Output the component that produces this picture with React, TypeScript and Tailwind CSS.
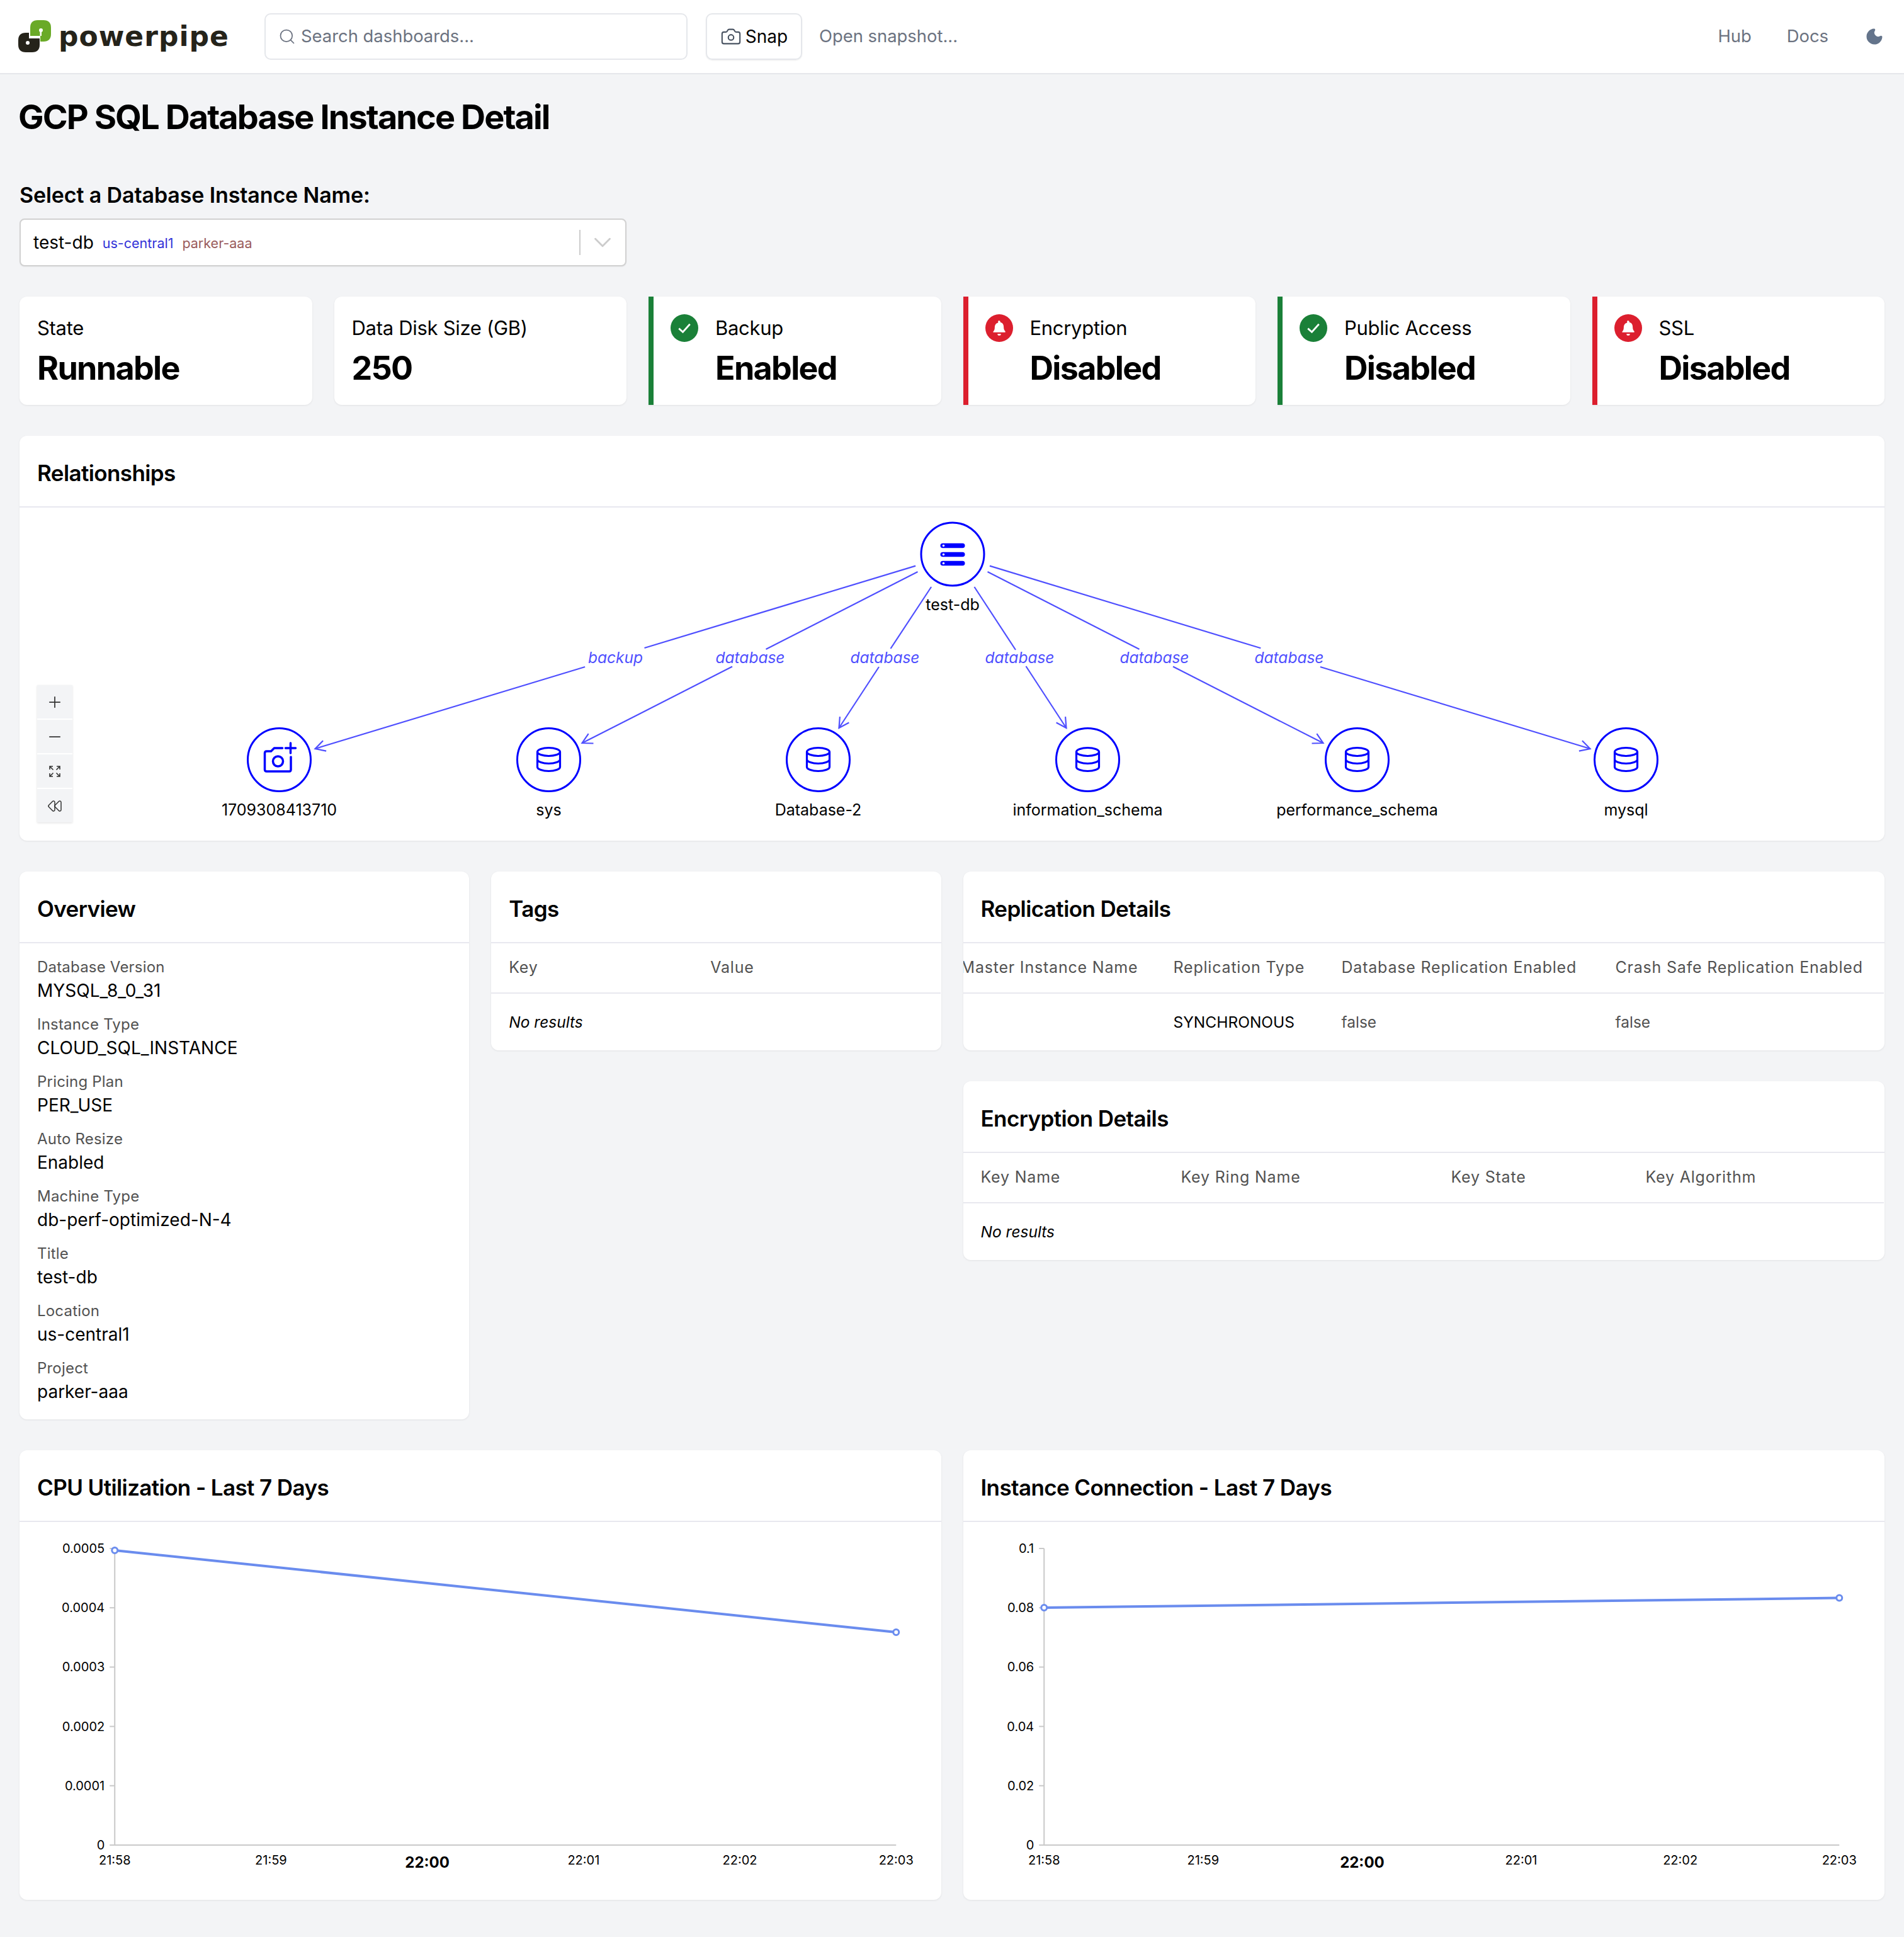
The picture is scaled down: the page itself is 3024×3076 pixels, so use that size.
import { Camera, ChevronDown, Minus, Moon, Plus, Rewind, Search } from 'lucide-react';
import type { ReactNode } from 'react';

const BLUE = '#0000ff';
const EDGE = '#4f4fff';

type Pt = [number, number];

const edges: { label: string; lx: number; a: Pt; b: Pt; c: Pt; tip: Pt }[] = [
  { label: 'backup', lx: 977, a: [1453.6, 898.6], b: [1023, 1029], c: [928.6, 1059], tip: [500, 1189] },
  { label: 'database', lx: 1191, a: [1457, 908], b: [1216, 1031], c: [1162.5, 1058.6], tip: [924, 1180] },
  { label: 'database', lx: 1405, a: [1478.6, 932], b: [1414, 1030], c: [1395.5, 1059], tip: [1332, 1156] },
  { label: 'database', lx: 1619, a: [1547, 932], b: [1612.5, 1032], c: [1629, 1058], tip: [1693, 1156] },
  { label: 'database', lx: 1833, a: [1568, 908], b: [1809, 1031], c: [1862.5, 1058.6], tip: [2101, 1180] },
  { label: 'database', lx: 2047, a: [1571.4, 898.6], b: [2001.8, 1029.3], c: [2096.4, 1059], tip: [2525, 1189] },
];

const nodes = [
  { x: 443, label: '1709308413710' },
  { x: 871, label: 'sys' },
  { x: 1299, label: 'Database-2' },
  { x: 1727, label: 'information_schema' },
  { x: 2155, label: 'performance_schema' },
  { x: 2582, label: 'mysql' },
];

function arrowHead(from: Pt, tip: Pt) {
  const ang = Math.atan2(tip[1] - from[1], tip[0] - from[0]);
  const len = 18;
  const p1 = [tip[0] - len * Math.cos(ang - 0.5), tip[1] - len * Math.sin(ang - 0.5)];
  const p2 = [tip[0] - len * Math.cos(ang + 0.5), tip[1] - len * Math.sin(ang + 0.5)];
  return `M${p1[0]} ${p1[1]} L${tip[0]} ${tip[1]} L${p2[0]} ${p2[1]}`;
}

function DbIcon({ x }: { x: number }) {
  return (
    <g fill="none" stroke={BLUE} strokeWidth="3.2" transform={`translate(${x} 1206)`}>
      <ellipse cx="0" cy="-12" rx="18" ry="6.5" />
      <path d="M-18 -12 V12 C-18 15.500 -10 18.500 0 18.500 C10 18.500 18 15.500 18 12 V-12" />
      <path d="M-18 0 C-18 3.500 -10 6.500 0 6.500 C10 6.500 18 3.500 18 0" />
    </g>
  );
}

function RelationshipGraph() {
  return (
    <svg viewBox="31 806 2961 529" className="block h-[529px] w-full">
      {edges.map((e, i) => (
        <g key={i} fill="none" stroke={EDGE} strokeWidth="2.2">
          <path d={`M${e.a[0]} ${e.a[1]} L${e.b[0]} ${e.b[1]}`} />
          <path d={`M${e.c[0]} ${e.c[1]} L${e.tip[0]} ${e.tip[1]}`} />
          <path d={arrowHead(e.c, e.tip)} />
          <text x={e.lx} y={1053} textAnchor="middle" fontSize="24.500" fontStyle="italic" fill={EDGE} stroke="none">
            {e.label}
          </text>
        </g>
      ))}

      <circle cx="1512.5" cy="880" r="50" fill="none" stroke={BLUE} strokeWidth="3" />
      {[866.5, 880.5, 894.5].map((y) => (
        <g key={y}>
          <rect x="1493" y={y - 3.75} width="39" height="7.5" rx="3.75" fill={BLUE} />
          <circle cx="1498" cy={y} r="1.8" fill="#fff" />
        </g>
      ))}
      <text x="1512.5" y="969" textAnchor="middle" fontSize="25" fill="#000" stroke="#fff" strokeWidth="4" paintOrder="stroke">
        test-db
      </text>

      {nodes.map((n, i) => (
        <g key={n.label}>
          <circle cx={n.x} cy="1206.5" r="50" fill="none" stroke={BLUE} strokeWidth="3" />
          {i === 0 ? (
            <g fill="none" stroke={BLUE} strokeWidth="3.5" strokeLinecap="round" strokeLinejoin="round">
              <path d="M448 1188 H435 L430 1193 H423 Q420 1193 420 1196 V1222 Q420 1225 423 1225 H459 Q461.5 1225 461.5 1222 V1202" />
              <circle cx="441" cy="1209" r="8" />
              <path d="M453 1188 H469 M461 1180 V1196" />
            </g>
          ) : (
            <DbIcon x={n.x} />
          )}
          <text x={n.x} y="1295" textAnchor="middle" fontSize="25" fill="#000">
            {n.label}
          </text>
        </g>
      ))}
    </svg>
  );
}

function FitIcon() {
  return (
    <svg viewBox="0 0 20 20" className="h-[20px] w-[20px]" fill="none" stroke="#333333" strokeWidth="1.6">
      <path d="M2 7 V2 H7 M2 2 L7.500 7.500" />
      <path d="M18 7 V2 H13 M18 2 L12.500 7.500" />
      <path d="M2 13 V18 H7 M2 18 L7.500 12.500" />
      <path d="M18 13 V18 H13 M18 18 L12.500 12.500" />
    </svg>
  );
}

type ChartProps = {
  viewX: number;
  viewW: number;
  axisX: number;
  endX: number;
  yLabels: string[];
  from: number;
  to: number;
};

const TIMES = ['21:58', '21:59', '22:00', '22:01', '22:02', '22:03'];

function LineChart({ viewX, viewW, axisX, endX, yLabels, from, to }: ChartProps) {
  const top = 2458;
  const bottom = 2929;
  const step = (endX - axisX) / 5;
  return (
    <svg viewBox={`${viewX} 2416 ${viewW} 600`} className="block h-[600px] w-full">
      <path d={`M${axisX} ${top} V${bottom} H${endX}`} fill="none" stroke="#c9c9c9" strokeWidth="2" />
      {yLabels.map((label, i) => {
        const y = top + ((bottom - top) / 5) * i;
        return (
          <g key={label}>
            <path d={`M${axisX - 8} ${y} H${axisX}`} stroke="#c9c9c9" strokeWidth="2" />
            <text x={axisX - 16} y={y + 7} textAnchor="end" fontSize="20" fill="#000">
              {label}
            </text>
          </g>
        );
      })}
      {TIMES.map((t, i) => (
        <text
          key={t}
          x={axisX + step * i}
          y={t === '22:00' ? 2965 : 2960}
          textAnchor="middle"
          fontSize={t === '22:00' ? 24 : 20}
          fontWeight={t === '22:00' ? 700 : 400}
          fill="#000"
        >
          {t}
        </text>
      ))}
      <path d={`M${axisX} ${from} L${endX} ${to}`} stroke="#6a8cee" strokeWidth="4" fill="none" />
      <circle cx={axisX} cy={from} r="4.5" fill="#fff" stroke="#6a8cee" strokeWidth="3" />
      <circle cx={endX} cy={to} r="4.5" fill="#fff" stroke="#6a8cee" strokeWidth="3" />
    </svg>
  );
}

function Panel({ title, className, children }: { title: string; className?: string; children: ReactNode }) {
  return (
    <section className={`overflow-hidden rounded-[12px] bg-white shadow-[0_1px_3px_rgba(0,0,0,0.08)] ${className ?? ''}`}>
      <h2 className="flex h-[114px] items-center border-b-2 border-[#e8e8ef] px-[28px] pt-[6px] text-[35px] font-semibold tracking-[-0.6px] text-black">
        {title}
      </h2>
      {children}
    </section>
  );
}

function StatCard({ label, value, status }: { label: string; value: string; status?: 'ok' | 'alert' }) {
  const border = status === 'ok' ? 'border-l-8 border-[#1a8038] pl-[27px]' : status === 'alert' ? 'border-l-8 border-[#dc1f2e] pl-[27px]' : 'pl-[28px]';
  return (
    <div className={`col-span-2 flex h-[172px] rounded-[12px] bg-white shadow-[0_1px_3px_rgba(0,0,0,0.08)] ${status ? 'rounded-l-none' : ''} ${border}`}>
      {status && (
        <div className={`mt-[28px] mr-[27px] flex h-[44px] w-[44px] shrink-0 items-center justify-center rounded-full ${status === 'ok' ? 'bg-[#1a8038]' : 'bg-[#dc1f2e]'}`}>
          {status === 'ok' ? (
            <svg viewBox="0 0 24 24" className="h-[30px] w-[30px]" fill="none" stroke="#fff" strokeWidth="2.2">
              <path d="M5 12.5 L10 17 L19 7" />
            </svg>
          ) : (
            <svg viewBox="0 0 24 24" className="h-[30px] w-[30px]" fill="#fff">
              <path d="M12 2.500a1.400 1.400 0 0 1 1.400 1.400v.7c3 .7 4.300 3.200 4.300 6.100 0 2.800.8 4 2 5.300v1.300H4.300V16.500c1.200-1.300 2-2.500 2-5.300 0-2.900 1.300-5.400 4.300-6.100v-.7A1.400 1.400 0 0 1 12 2.500zM9.800 19.300h4.400a2.200 2.200 0 0 1-4.400 0z" />
            </svg>
          )}
        </div>
      )}
      <div className="flex flex-col pt-[30px]">
        <div className="text-[31px] leading-[40px] tracking-[-0.3px] text-black">{label}</div>
        <div className="mt-[9px] text-[52px] leading-[70px] font-bold tracking-[-1.7px] text-black">{value}</div>
      </div>
    </div>
  );
}

const overview = [
  ['Database Version', 'MYSQL_8_0_31'],
  ['Instance Type', 'CLOUD_SQL_INSTANCE'],
  ['Pricing Plan', 'PER_USE'],
  ['Auto Resize', 'Enabled'],
  ['Machine Type', 'db-perf-optimized-N-4'],
  ['Title', 'test-db'],
  ['Location', 'us-central1'],
  ['Project', 'parker-aaa'],
];

function DataTable({ columns, row, shift }: { columns: [string, string][]; row?: string[]; shift?: string }) {
  return (
    <div className="overflow-hidden">
      <table className={`table-fixed whitespace-nowrap ${shift ?? ''}`}>
        <thead>
          <tr className="border-b-2 border-[#e8e8ef]">
            {columns.map(([name, w]) => (
              <th key={name} className={`h-[79px] pl-[28px] text-left text-[25px] font-normal tracking-[0.8px] text-[#525252] ${w}`}>
                {name}
              </th>
            ))}
          </tr>
        </thead>
        <tbody>
          <tr>
            {row ? (
              row.map((v, i) => (
                <td key={i} className={`h-[91px] pl-[28px] text-[24.5px] ${v === 'false' ? 'text-[#525252]' : 'text-black'}`}>
                  {v}
                </td>
              ))
            ) : (
              <td colSpan={columns.length} className="h-[91px] pl-[28px] text-[24.5px] text-black italic">
                No results
              </td>
            )}
          </tr>
        </tbody>
      </table>
    </div>
  );
}

export default function App() {
  return (
    <div className="min-h-[3076px] bg-[#f3f4f6] font-[Inter,sans-serif]">
      <header className="flex h-[118px] items-center border-b-2 border-[#e5e7eb] bg-white pr-[32px] pl-[29px]">
        <div className="flex w-[391px] items-center gap-[11px]">
          <svg viewBox="29 32 53 52" className="h-[52px] w-[53px] shrink-0">
            <path d="M48 57 V44 Q48 32 60 32 H69 Q81 32 81 44 V54 Q81 66 69 66 H64 V57 Z" fill="#6aaa27" />
            <circle cx="65" cy="48" r="3" fill="#fff" />
            <path d="M63.500 48 H66 V57 H63.500 Z" fill="#fff" />
            <path d="M29 64 Q29 52 41 52 H46 V61 H63 V71 Q63 83 51 83 H41 Q29 83 29 71 Z" fill="#25231a" />
            <circle cx="44" cy="68" r="3" fill="#fff" />
          </svg>
          <span className="font-['DejaVu_Sans',sans-serif] text-[44px] leading-none font-bold tracking-[1px] text-[#25231a]">powerpipe</span>
        </div>
        <div className="flex h-[74px] w-[672px] items-center gap-[8px] rounded-[10px] border-2 border-[#e5e7eb] pl-[20px] text-[27.4px] text-[#6b7280]">
          <Search className="h-[28px] w-[28px]" strokeWidth={1.5} />
          Search dashboards...
        </div>
        <button type="button" className="ml-[29px] flex h-[74px] w-[153px] items-center justify-center gap-[6px] rounded-[10px] border-2 border-[#e5e7eb] text-[28px] text-black shadow-[0_1px_2px_rgba(0,0,0,0.08)]">
          <Camera className="h-[34px] w-[34px] text-[#4b5563]" strokeWidth={1.5} />
          Snap
        </button>
        <span className="ml-[27px] text-[27.4px] text-[#6b7280]">Open snapshot...</span>
        <nav className="ml-auto flex items-center text-[27.4px] text-[#6b7280]">
          <span>Hub</span>
          <span className="ml-[56px]">Docs</span>
          <Moon className="ml-[58px] h-[30px] w-[30px] fill-[#64748b] text-[#64748b]" />
        </nav>
      </header>

      <main className="px-[31px] pt-[38px]">
        <h1 className="-ml-[2px] text-[54px] leading-[60px] font-bold tracking-[-1.9px] text-black">GCP SQL Database Instance Detail</h1>
        <label className="mt-[74px] mb-[17px] block text-[34px] leading-[40px] font-semibold tracking-[-0.12px] text-black">
          Select a Database Instance Name:
        </label>
        <div className="flex h-[76px] w-[964px] items-center rounded-[8px] border-2 border-[#d1d1d1] bg-white pl-[20px] shadow-[0_1px_2px_rgba(0,0,0,0.05)]">
          <span className="text-[28px] text-black">test-db</span>
          <span className="ml-[14px] pt-[3px] text-[21.5px] text-[#3232d8]">us-central1</span>
          <span className="ml-[14px] pt-[3px] text-[21.5px] text-[#9a5c5c]">parker-aaa</span>
          <span className="ml-auto h-[40px] w-[2px] bg-[#cccccc]" />
          <ChevronDown className="mr-[13px] ml-[12px] h-[46px] w-[46px] text-[#cccccc]" strokeWidth={1.5} />
        </div>

        <div className="mt-[48px] grid grid-cols-12 gap-x-[35px] gap-y-[49px]">
          <StatCard label="State" value="Runnable" />
          <StatCard label="Data Disk Size (GB)" value="250" />
          <StatCard label="Backup" value="Enabled" status="ok" />
          <StatCard label="Encryption" value="Disabled" status="alert" />
          <StatCard label="Public Access" value="Disabled" status="ok" />
          <StatCard label="SSL" value="Disabled" status="alert" />

          <Panel title="Relationships" className="relative col-span-12">
            <RelationshipGraph />
            <div className="absolute top-[396px] left-[28px] flex w-[56px] flex-col gap-[2px] text-[#333333] shadow-[0_1px_3px_rgba(0,0,0,0.12)]">
              <div className="flex h-[53px] items-center justify-center bg-[#f3f4f6]">
                <Plus className="h-[28px] w-[28px]" strokeWidth={1.5} />
              </div>
              <div className="flex h-[53px] items-center justify-center bg-[#f3f4f6]">
                <Minus className="h-[28px] w-[28px]" strokeWidth={1.5} />
              </div>
              <div className="flex h-[53px] items-center justify-center bg-[#f3f4f6]">
                <FitIcon />
              </div>
              <div className="flex h-[53px] items-center justify-center bg-[#f3f4f6]">
                <Rewind className="h-[24px] w-[24px]" strokeWidth={1.5} />
              </div>
            </div>
          </Panel>

          <Panel title="Overview" className="col-span-3 self-start">
            <div className="px-[28px] pt-[11px] pb-[17px]">
              {overview.map(([label, value]) => (
                <div key={label} className="flex h-[91px] flex-col justify-center">
                  <div className="text-[24px] leading-[36px] tracking-[0.2px] text-[#525252]">{label}</div>
                  <div className="text-[28px] leading-[38px] text-black">{value}</div>
                </div>
              ))}
            </div>
          </Panel>

          <Panel title="Tags" className="col-span-3 self-start">
            <DataTable columns={[['Key', 'w-[320px]'], ['Value', 'w-[394px]']]} />
          </Panel>

          <div className="col-span-6 flex flex-col gap-[49px]">
            <Panel title="Replication Details">
              <DataTable
                shift="-ml-[32px]"
                columns={[
                  ['Master Instance Name', 'w-[338px]'],
                  ['Replication Type', 'w-[267px]'],
                  ['Database Replication Enabled', 'w-[435px]'],
                  ['Crash Safe Replication Enabled', 'w-[454px]'],
                ]}
                row={['', 'SYNCHRONOUS', 'false', 'false']}
              />
            </Panel>
            <Panel title="Encryption Details">
              <DataTable
                columns={[
                  ['Key Name', 'w-[318px]'],
                  ['Key Ring Name', 'w-[429px]'],
                  ['Key State', 'w-[309px]'],
                  ['Key Algorithm', 'w-[406px]'],
                ]}
              />
            </Panel>
          </div>

          <Panel title="CPU Utilization - Last 7 Days" className="col-span-6">
            <LineChart
              viewX={31}
              viewW={1463}
              axisX={182}
              endX={1423}
              yLabels={['0.0005', '0.0004', '0.0003', '0.0002', '0.0001', '0']}
              from={2461}
              to={2591}
            />
          </Panel>
          <Panel title="Instance Connection - Last 7 Days" className="col-span-6">
            <LineChart
              viewX={1530}
              viewW={1463}
              axisX={1658}
              endX={2921}
              yLabels={['0.1', '0.08', '0.06', '0.04', '0.02', '0']}
              from={2552}
              to={2536.6}
            />
          </Panel>
        </div>
      </main>
    </div>
  );
}
